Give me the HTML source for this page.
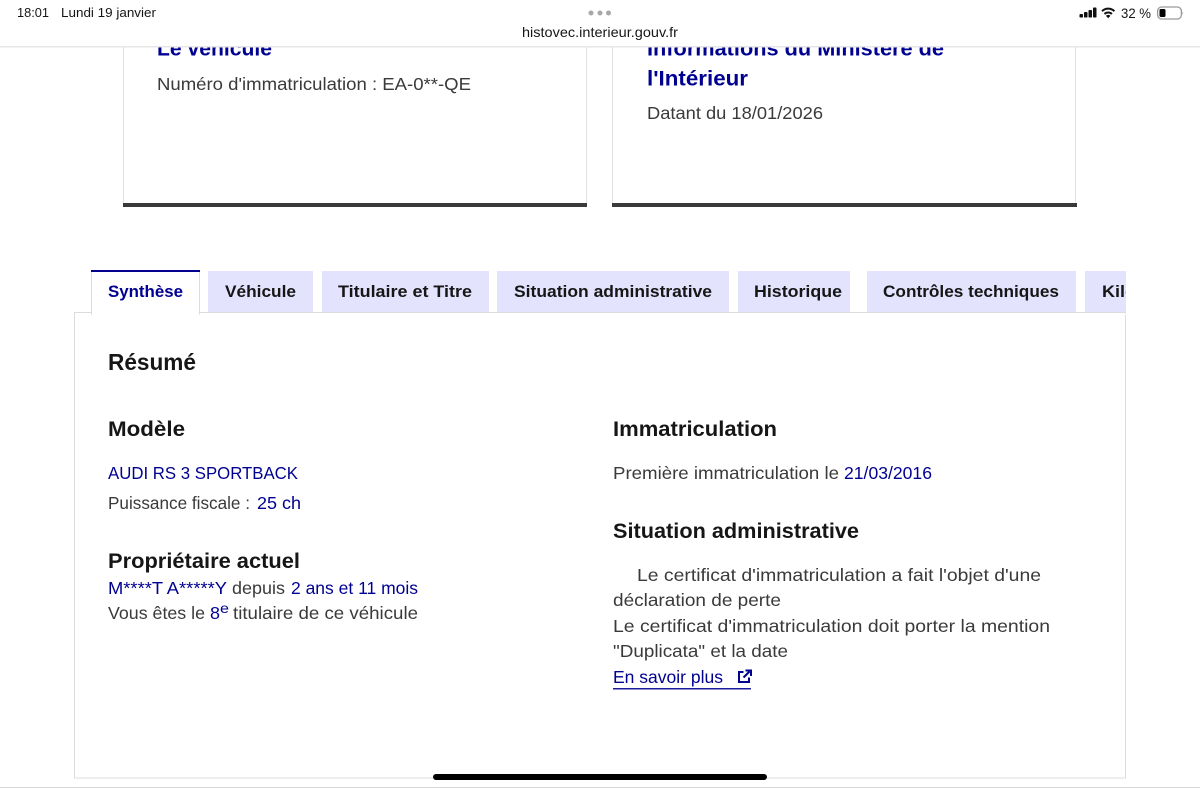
<!DOCTYPE html>
<html lang="fr"><head><meta charset="utf-8"><title>HistoVec</title>
<style>
html,body{margin:0;padding:0;width:1200px;height:788px;overflow:hidden;background:#fff}
svg{display:block;position:absolute;left:0;top:0}
text{font-family:"Liberation Sans",sans-serif;white-space:pre}
.g{fill:#3a3a3a;font-size:17.5px}
.b{fill:#000091;font-size:17.5px}
.h{fill:#161616;font-weight:700;font-size:21px}
.c{fill:#000091;font-weight:700;font-size:21px}
.t{fill:#161616;font-weight:700;font-size:17px}
.s{fill:#161616;font-size:13px}
</style></head><body>
<svg width="1200" height="788" viewBox="0 0 1200 788" xmlns="http://www.w3.org/2000/svg">
<rect width="1200" height="788" fill="#fff"/>
<!-- cards -->
<rect x="123.500" y="40" width="463" height="165" fill="#fff" stroke="#e2e2e2"/>
<rect x="123" y="203" width="464" height="4" fill="#3a3a3a"/>
<rect x="612.500" y="40" width="463" height="165" fill="#fff" stroke="#e2e2e2"/>
<rect x="612" y="203" width="465" height="4" fill="#3a3a3a"/>
<text class="c" x="157" y="55.500" textLength="115" lengthAdjust="spacingAndGlyphs">Le véhicule</text>
<text class="g" x="157" y="90" textLength="314" lengthAdjust="spacingAndGlyphs">Numéro d'immatriculation : EA-0**-QE</text>
<text class="c" x="647" y="55.500" textLength="297" lengthAdjust="spacingAndGlyphs">Informations du Ministère de</text>
<text class="c" x="647" y="85.500" textLength="101" lengthAdjust="spacingAndGlyphs">l'Intérieur</text>
<text class="g" x="647" y="119" textLength="176" lengthAdjust="spacingAndGlyphs">Datant du 18/01/2026</text>
<!-- panel -->
<rect x="74.500" y="312.500" width="1051" height="465.500" fill="#fff" stroke="#dcdcdc"/>
<rect x="1124" y="313.500" width="3" height="1.500" fill="#fff"/>
<!-- tabs -->
<rect x="208" y="271" width="105" height="41" fill="#e3e3fd"/>
<rect x="322" y="271" width="167" height="41" fill="#e3e3fd"/>
<rect x="497" y="271" width="232" height="41" fill="#e3e3fd"/>
<rect x="738" y="271" width="112" height="41" fill="#e3e3fd"/>
<rect x="867" y="271" width="209" height="41" fill="#e3e3fd"/>
<rect x="1085" y="271" width="41" height="41" fill="#e3e3fd"/>
<rect x="91.500" y="271" width="108" height="43" fill="#fff" stroke="#dcdcdc"/>
<rect x="92" y="312" width="107" height="3" fill="#fff"/>
<rect x="91" y="270" width="109" height="2" fill="#000091"/>
<text class="t" x="108" y="297" textLength="75" lengthAdjust="spacingAndGlyphs" style="fill:#000091">Synthèse</text>
<text class="t" x="225" y="297" textLength="71" lengthAdjust="spacingAndGlyphs">Véhicule</text>
<text class="t" x="338" y="297" textLength="134" lengthAdjust="spacingAndGlyphs">Titulaire et Titre</text>
<text class="t" x="514" y="297" textLength="198" lengthAdjust="spacingAndGlyphs">Situation administrative</text>
<text class="t" x="754" y="297" textLength="88" lengthAdjust="spacingAndGlyphs">Historique</text>
<text class="t" x="883" y="297" textLength="176" lengthAdjust="spacingAndGlyphs">Contrôles techniques</text>
<svg x="1085" y="260" width="41" height="60"><text class="t" x="17" y="37" textLength="104" lengthAdjust="spacingAndGlyphs">Kilométrage</text></svg>
<!-- left column -->
<text class="h" x="108" y="370" textLength="88" lengthAdjust="spacingAndGlyphs" style="font-size:23px">Résumé</text>
<text class="h" x="108" y="436" textLength="77" lengthAdjust="spacingAndGlyphs">Modèle</text>
<text class="b" x="108" y="479" textLength="190" lengthAdjust="spacingAndGlyphs">AUDI RS 3 SPORTBACK</text>
<text class="g" x="108" y="509" textLength="142" lengthAdjust="spacingAndGlyphs">Puissance fiscale :</text>
<text class="b" x="257" y="509" textLength="44" lengthAdjust="spacingAndGlyphs">25 ch</text>
<text class="h" x="108" y="568" textLength="192" lengthAdjust="spacingAndGlyphs">Propriétaire actuel</text>
<text class="b" x="108" y="594" textLength="119" lengthAdjust="spacingAndGlyphs">M****T A*****Y</text>
<text class="g" x="232" y="594" textLength="53" lengthAdjust="spacingAndGlyphs">depuis</text>
<text class="b" x="291" y="594" textLength="127" lengthAdjust="spacingAndGlyphs">2 ans et 11 mois</text>
<text class="g" x="108" y="619" textLength="97" lengthAdjust="spacingAndGlyphs">Vous êtes le</text>
<text class="b" x="210" y="619" textLength="10" lengthAdjust="spacingAndGlyphs">8</text>
<text class="b" x="220" y="613" textLength="9" lengthAdjust="spacingAndGlyphs" style="font-size:14px">e</text>
<text class="g" x="233" y="619" textLength="185" lengthAdjust="spacingAndGlyphs">titulaire de ce véhicule</text>
<!-- right column -->
<text class="h" x="613" y="436" textLength="164" lengthAdjust="spacingAndGlyphs">Immatriculation</text>
<text class="g" x="613" y="479" textLength="226" lengthAdjust="spacingAndGlyphs">Première immatriculation le</text>
<text class="b" x="844" y="479" textLength="88" lengthAdjust="spacingAndGlyphs">21/03/2016</text>
<text class="h" x="613" y="538" textLength="246" lengthAdjust="spacingAndGlyphs">Situation administrative</text>
<text class="g" x="637" y="581" textLength="404" lengthAdjust="spacingAndGlyphs">Le certificat d'immatriculation a fait l'objet d'une</text>
<text class="g" x="613" y="606" textLength="168" lengthAdjust="spacingAndGlyphs">déclaration de perte</text>
<text class="g" x="613" y="632" textLength="437" lengthAdjust="spacingAndGlyphs">Le certificat d'immatriculation doit porter la mention</text>
<text class="g" x="613" y="657" textLength="175" lengthAdjust="spacingAndGlyphs">"Duplicata" et la date</text>
<text class="b" x="613" y="683" textLength="110" lengthAdjust="spacingAndGlyphs">En savoir plus</text>
<rect x="613" y="688" width="138" height="1.500" fill="#1a1a9c"/>
<path d="M743.500 672H739V682H749V677.500" fill="none" stroke="#000091" stroke-width="2"/>
<path d="M743.500 677.500L749.500 671.500" fill="none" stroke="#000091" stroke-width="2"/>
<path d="M745.500 670.500H751V676" fill="none" stroke="#000091" stroke-width="2"/>
<!-- top bar -->
<rect x="0" y="0" width="1200" height="46" fill="#fff"/>
<rect x="0" y="46" width="1200" height="1.500" fill="#e6e6e6"/>
<text class="s" x="17" y="17" textLength="32" lengthAdjust="spacingAndGlyphs">18:01</text>
<text class="s" x="61" y="17" textLength="95" lengthAdjust="spacingAndGlyphs">Lundi 19 janvier</text>
<circle cx="591" cy="13" r="2.500" fill="#a8a8a8"/><circle cx="600" cy="13" r="2.500" fill="#a8a8a8"/><circle cx="608.500" cy="13" r="2.500" fill="#a8a8a8"/>
<text class="s" x="522" y="37" textLength="156" lengthAdjust="spacingAndGlyphs" style="font-size:14px">histovec.interieur.gouv.fr</text>
<rect x="1079.500" y="14" width="3.500" height="3.500" rx=".8" fill="#111"/><rect x="1084" y="12" width="3.500" height="5.500" rx=".8" fill="#111"/><rect x="1088.500" y="10" width="3.500" height="7.500" rx=".8" fill="#111"/><rect x="1093" y="7.500" width="3.500" height="10" rx=".8" fill="#111"/>
<path d="M1102 11.200A8.800 8.800 0 0 1 1114.400 11.200M1104.500 14A5.200 5.200 0 0 1 1111.900 14" fill="none" stroke="#111" stroke-width="2"/>
<path d="M1105.900 15.800L1108.200 18.200L1110.500 15.800A3.400 3.400 0 0 0 1105.900 15.800Z" fill="#111"/>
<text class="s" x="1121" y="18" textLength="30" lengthAdjust="spacingAndGlyphs" style="font-size:14px">32 %</text>
<rect x="1157.600" y="7" width="23.800" height="12" rx="4" fill="none" stroke="#9a9a9a" stroke-width="1.300"/>
<rect x="1159.500" y="9" width="6" height="8" rx="1.500" fill="#000"/>
<path d="M1182.500 11.500a2 2 0 0 1 0 3z" fill="#9a9a9a"/>
<!-- bottom -->
<rect x="0" y="787" width="1200" height="1" fill="#d8d8d8"/>
<rect x="433" y="774" width="334" height="6" rx="3" fill="#000"/>
</svg>
</body></html>
